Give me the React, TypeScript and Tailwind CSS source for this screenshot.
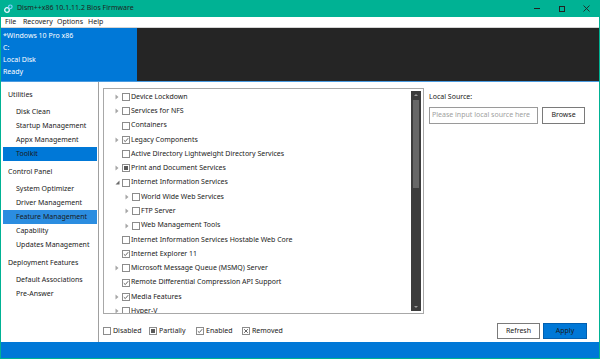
import React from 'react'

type Check = 'off' | 'on' | 'partial' | 'removed'
type Expand = 'none' | 'closed' | 'open'

interface FeatureRow {
  name: string
  state: Check
  level: 0 | 1
  expand: Expand
}

const FEATURES: FeatureRow[] = [
  { name: 'Device Lockdown', state: 'off', level: 0, expand: 'closed' },
  { name: 'Services for NFS', state: 'off', level: 0, expand: 'closed' },
  { name: 'Containers', state: 'off', level: 0, expand: 'none' },
  { name: 'Legacy Components', state: 'on', level: 0, expand: 'closed' },
  { name: 'Active Directory Lightweight Directory Services', state: 'off', level: 0, expand: 'none' },
  { name: 'Print and Document Services', state: 'partial', level: 0, expand: 'closed' },
  { name: 'Internet Information Services', state: 'off', level: 0, expand: 'open' },
  { name: 'World Wide Web Services', state: 'off', level: 1, expand: 'closed' },
  { name: 'FTP Server', state: 'off', level: 1, expand: 'closed' },
  { name: 'Web Management Tools', state: 'off', level: 1, expand: 'closed' },
  { name: 'Internet Information Services Hostable Web Core', state: 'off', level: 0, expand: 'none' },
  { name: 'Internet Explorer 11', state: 'on', level: 0, expand: 'none' },
  { name: 'Microsoft Message Queue (MSMQ) Server', state: 'off', level: 0, expand: 'closed' },
  { name: 'Remote Differential Compression API Support', state: 'on', level: 0, expand: 'none' },
  { name: 'Media Features', state: 'on', level: 0, expand: 'closed' },
  { name: 'Hyper-V', state: 'off', level: 0, expand: 'closed' },
]

const NAV: { label: string; header?: boolean; active?: 'dark' | 'light'; gap?: string }[] = [
  { label: 'Utilities', header: true },
  { label: 'Disk Clean', gap: 'mt-[3px]' },
  { label: 'Startup Management' },
  { label: 'Appx Management' },
  { label: 'Toolkit', active: 'dark' },
  { label: 'Control Panel', header: true, gap: 'mt-[4px]' },
  { label: 'System Optimizer', gap: 'mt-[3px]' },
  { label: 'Driver Management' },
  { label: 'Feature Management', active: 'light' },
  { label: 'Capability' },
  { label: 'Updates Management' },
  { label: 'Deployment Features', header: true, gap: 'mt-[4px]' },
  { label: 'Default Associations', gap: 'mt-[3px]' },
  { label: 'Pre-Answer' },
]

function CheckBox({ state }: { state: Check }) {
  return (
    <span className="flex h-[8px] w-[8px] shrink-0 items-center justify-center border border-[#8c8c8c] bg-white">
      {state === 'on' && (
        <svg width="6" height="6" viewBox="0 0 6 6">
          <path d="M0.8 3.2 L2.3 4.6 L5.2 1.2" fill="none" stroke="#555" strokeWidth="0.9" />
        </svg>
      )}
      {state === 'partial' && <span className="h-[4px] w-[4px] bg-[#5a5a5a]" />}
      {state === 'removed' && (
        <svg width="6" height="6" viewBox="0 0 6 6">
          <path d="M1.2 1.2 L4.8 4.8 M4.8 1.2 L1.2 4.8" fill="none" stroke="#555" strokeWidth="0.9" />
        </svg>
      )}
    </span>
  )
}

function Expander({ kind }: { kind: Expand }) {
  return (
    <span className="flex w-[7px] shrink-0 items-center">
      {kind === 'closed' && (
        <svg width="4" height="6" viewBox="0 0 4 6">
          <path d="M0.5 0.5 L3.5 3 L0.5 5.5 Z" fill="#a6a6a6" />
        </svg>
      )}
      {kind === 'open' && (
        <svg width="5" height="5" viewBox="0 0 5 5">
          <path d="M4.5 0.5 L4.5 4.5 L0.5 4.5 Z" fill="#6b6b6b" />
        </svg>
      )}
    </span>
  )
}

function TitleIcon() {
  return (
    <svg width="9" height="9" viewBox="0 0 9 9">
      <circle cx="3" cy="6" r="2.3" fill="none" stroke="#e8f6ff" strokeWidth="1.3" />
      <circle cx="6.3" cy="2.8" r="1.8" fill="none" stroke="#7fd0ff" strokeWidth="1.2" />
    </svg>
  )
}

export default function App() {
  return (
    <div className="flex h-[359px] w-[600px] flex-col overflow-hidden border-x border-b border-[#00b294] bg-white font-['Noto_Sans',sans-serif] text-[7px] text-[#1a1a1a]">
      {/* title bar */}
      <div className="flex h-[17px] shrink-0 items-center bg-[#00b294] pl-[3px] text-[#1f1f1f]">
        <TitleIcon />
        <span className="ml-[4px]">Dism++x86 10.1.11.2 Bios Firmware</span>
        <div className="ml-auto flex items-center">
          <span className="flex w-[25px] justify-center">
            <span className="h-[1px] w-[6px] bg-[#222]" />
          </span>
          <span className="flex w-[25px] justify-center">
            <span className="h-[6px] w-[6px] border border-[#222]" />
          </span>
          <span className="flex w-[25px] justify-center">
            <svg width="7" height="7" viewBox="0 0 7 7">
              <path d="M0.5 0.5 L6.5 6.5 M6.5 0.5 L0.5 6.5" stroke="#222" strokeWidth="0.9" />
            </svg>
          </span>
        </div>
      </div>

      {/* menu */}
      <div className="flex h-[11px] shrink-0 items-center border-b border-[#d4d4d4] bg-white pl-[4px]">
        <span className="w-[18px]">File</span>
        <span className="w-[34px]">Recovery</span>
        <span className="w-[31px]">Options</span>
        <span>Help</span>
      </div>

      {/* header */}
      <div className="flex h-[54px] shrink-0 border-b border-[#4a9be0]">
        <div className="flex w-[136px] flex-col bg-[#0078d7] pl-[2px] pt-[2px] text-white">
          <span className="leading-[12px]">*Windows 10 Pro x86</span>
          <span className="leading-[12px]">C:</span>
          <span className="leading-[12px]">Local Disk</span>
          <span className="leading-[12px]">Ready</span>
        </div>
        <div className="flex-1 bg-[#252525]" />
      </div>

      {/* main */}
      <div className="flex min-h-0 flex-1">
        <div className="flex w-[98px] shrink-0 flex-col border-r border-[#a0a0a0] pt-[6px]">
          {NAV.map((n) => (
            <div
              key={n.label}
              className={`ml-[2px] mr-[1px] flex h-[14px] items-center ${n.gap ?? ''} ${n.header ? 'pl-[5px]' : 'pl-[13px]'} ${
                n.active === 'dark' ? 'bg-[#0078d7]' : n.active === 'light' ? 'bg-[#2b8de0]' : ''
              }`}
            >
              {n.label}
            </div>
          ))}
        </div>

        <div className="flex min-w-0 flex-1 flex-col">
          <div className="flex">
            <div className="ml-[4px] mt-[6px] flex h-[226px] w-[321px] border border-[#a8a8a8] bg-white">
              <div className="flex min-w-0 flex-1 flex-col overflow-hidden pt-[1px]">
                {FEATURES.map((f) => (
                  <div
                    key={f.name}
                    className={`flex h-[14.27px] shrink-0 items-center whitespace-nowrap ${f.level === 1 ? 'pl-[21px]' : 'pl-[11px]'}`}
                  >
                    <Expander kind={f.expand} />
                    <CheckBox state={f.state} />
                    <span className="ml-[1px]">{f.name}</span>
                  </div>
                ))}
              </div>
              <div className="my-[2px] mr-[2px] flex w-[10px] flex-col items-center bg-[#3c3c3c]">
                <svg width="6" height="6" viewBox="0 0 6 6" className="mt-[1px]">
                  <path d="M1 4 L3 2 L5 4 Z" fill="#9a9a9a" />
                </svg>
                <div className="mt-[2px] h-[88px] w-[6px] bg-[#676767]" />
                <div className="flex-1" />
                <svg width="6" height="6" viewBox="0 0 6 6" className="mb-[1px]">
                  <path d="M1 2 L3 4 L5 2 Z" fill="#9a9a9a" />
                </svg>
              </div>
            </div>

            <div className="ml-[5px] mt-[10px] flex flex-col">
              <span className="leading-[10px]">Local Source:</span>
              <div className="mt-[5px] flex gap-[4px]">
                <div className="flex h-[17px] w-[109px] items-center border border-[#9a9a9a] pl-[2px] text-[#a0a0a0]">
                  Please input local source here
                </div>
                <button className="h-[17px] w-[43px] border border-[#7a7a7a] bg-white text-[#1a1a1a]">Browse</button>
              </div>
            </div>
          </div>

          <div className="mt-[9px] flex h-[16px] items-center">
            <div className="ml-[4px] flex items-center">
              <CheckBox state="off" />
              <span className="ml-[2px] w-[36px]">Disabled</span>
              <CheckBox state="partial" />
              <span className="ml-[2px] w-[37px]">Partially</span>
              <CheckBox state="on" />
              <span className="ml-[2px] w-[36px]">Enabled</span>
              <CheckBox state="removed" />
              <span className="ml-[2px]">Removed</span>
            </div>
            <div className="ml-auto mr-[12px] flex gap-[3px]">
              <button className="h-[16px] w-[43px] border border-[#7a7a7a] bg-white">Refresh</button>
              <button className="h-[16px] w-[44px] border border-[#005fb0] bg-[#0078d7]">Apply</button>
            </div>
          </div>
        </div>
      </div>

      {/* status bar */}
      <div className="h-[16px] shrink-0 bg-[#0078d7]" />
    </div>
  )
}
